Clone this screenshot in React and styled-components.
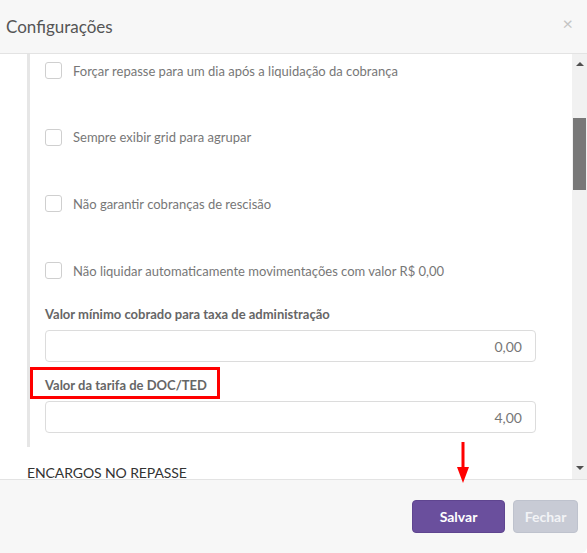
import React from 'react'
import styled, { createGlobalStyle } from 'styled-components'

const Global = createGlobalStyle`
    html, body { margin: 0; padding: 0; }
    body {
        font-family: Lato, "Open Sans", sans-serif;
        background: #fff;
    }
`

const Modal = styled.div`
    position: relative;
    width: 587px;
    height: 553px;
    display: flex;
    flex-direction: column;
    overflow: hidden;
    border-bottom-right-radius: 6px;
`

const Header = styled.div`
    height: 53px;
    flex-shrink: 0;
    background: #f7f7f7;
    border-bottom: 1px solid #e3e3e3;
    display: flex;
    align-items: center;
    justify-content: space-between;
    padding: 0 14px 0 6px;
`

const Title = styled.h4`
    margin: 0;
    font-size: 17px;
    font-weight: 400;
    color: #555;
    padding-bottom: 1px;
`

const Close = styled.span`
    font-size: 18px;
    color: #c4c4c4;
    line-height: 1;
    margin-top: -8px;
`

const Body = styled.div`
    flex: 1;
    display: flex;
    background: #fff;
    min-height: 0;
`

const Content = styled.div`
    flex: 1;
    padding: 0 0 0 27px;
    display: flex;
    flex-direction: column;
`

const Section = styled.div`
    border-left: 3px solid #e6e6e6;
    padding: 8px 36px 14px 15px;
    display: flex;
    flex-direction: column;
`

const CheckRow = styled.label`
    display: flex;
    align-items: center;
    gap: 11px;
    height: 17px;
    margin-bottom: ${p => p.$last ? '25px' : '49.7px'};
    font-size: 13px;
    color: #777;
`

const Box = styled.span`
    width: 15px;
    height: 15px;
    border: 1px solid #cfcfcf;
    border-radius: 3px;
    background: #fff;
    flex-shrink: 0;
`

const FieldLabel = styled.div`
    position: relative;
    font-size: 13px;
    font-weight: 700;
    color: #666;
    height: 20px;
    line-height: 20px;
    margin-bottom: 6px;
`

const Highlight = styled.span`
    position: absolute;
    left: -15px;
    top: -8px;
    width: 184px;
    height: 26px;
    border: 3px solid #f00;
`

const Input = styled.div`
    height: 30px;
    border: 1px solid #dcdcdc;
    border-radius: 4px;
    display: flex;
    align-items: center;
    justify-content: flex-end;
    padding-right: 13px;
    font-size: 14px;
    color: #777;
    margin-bottom: ${p => p.$gap || '0'};
`

const SectionTitle = styled.div`
    font-size: 14px;
    color: #333;
    margin-top: 17px;
    letter-spacing: -0.1px;
`

const Scrollbar = styled.div`
    width: 15px;
    background: #f1f1f1;
    display: flex;
    flex-direction: column;
    align-items: center;
    flex-shrink: 0;
`

const Arrow = styled.div`
    width: 0;
    height: 0;
    border-left: 4px solid transparent;
    border-right: 4px solid transparent;
    ${p => p.$down ? 'border-top: 4px solid #505050;' : 'border-bottom: 4px solid #505050;'}
    margin: ${p => p.$down ? 'auto 0 9px' : '8px 0 0'};
`

const Thumb = styled.div`
    width: 13px;
    height: 72px;
    background: #787878;
    margin-top: 52px;
`

const Footer = styled.div`
    height: 74px;
    flex-shrink: 0;
    background: #f7f7f7;
    border-top: 1px solid #e3e3e3;
    display: flex;
    justify-content: flex-end;
    align-items: flex-start;
    gap: 8px;
    padding: 20px 9px 0 0;
    box-sizing: border-box;
`

const Button = styled.button`
    height: 33px;
    width: ${p => p.$w};
    border-radius: 4px;
    font-family: Lato, "Open Sans", sans-serif;
    font-size: 14px;
    font-weight: 700;
    cursor: pointer;
    background: ${p => p.$primary ? '#6a4f9d' : '#c8cbd5'};
    border: 1px solid ${p => p.$primary ? '#5f4590' : '#bec2cd'};
    color: ${p => p.$primary ? '#fff' : '#f2f3f6'};
`

const RedArrow = styled.svg`
    position: absolute;
    left: 456px;
    top: 442px;
`

const checks = [
    'Forçar repasse para um dia após a liquidação da cobrança',
    'Sempre exibir grid para agrupar',
    'Não garantir cobranças de rescisão',
    'Não liquidar automaticamente movimentações com valor R$ 0,00',
]

export default function App() {
    return (
        <>
            <Global />
            <Modal>
                <Header>
                    <Title>Configurações</Title>
                    <Close>×</Close>
                </Header>
                <Body>
                    <Content>
                        <Section>
                            {checks.map((c, i) => (
                                <CheckRow key={c} $last={i === checks.length - 1}>
                                    <Box />
                                    {c}
                                </CheckRow>
                            ))}
                            <FieldLabel>Valor mínimo cobrado para taxa de administração</FieldLabel>
                            <Input $gap="13px">0,00</Input>
                            <FieldLabel>
                                <Highlight />
                                Valor da tarifa de DOC/TED
                            </FieldLabel>
                            <Input>4,00</Input>
                        </Section>
                        <SectionTitle>ENCARGOS NO REPASSE</SectionTitle>
                    </Content>
                    <Scrollbar>
                        <Arrow />
                        <Thumb />
                        <Arrow $down />
                    </Scrollbar>
                </Body>
                <Footer>
                    <Button $primary $w="93px">Salvar</Button>
                    <Button $w="65px">Fechar</Button>
                </Footer>
                <RedArrow width="14" height="42" viewBox="0 0 14 42">
                    <rect x="5.5" y="0" width="3" height="28" fill="#f00" />
                    <polygon points="1,25 13,25 7,41" fill="#f00" />
                </RedArrow>
            </Modal>
        </>
    )
}
